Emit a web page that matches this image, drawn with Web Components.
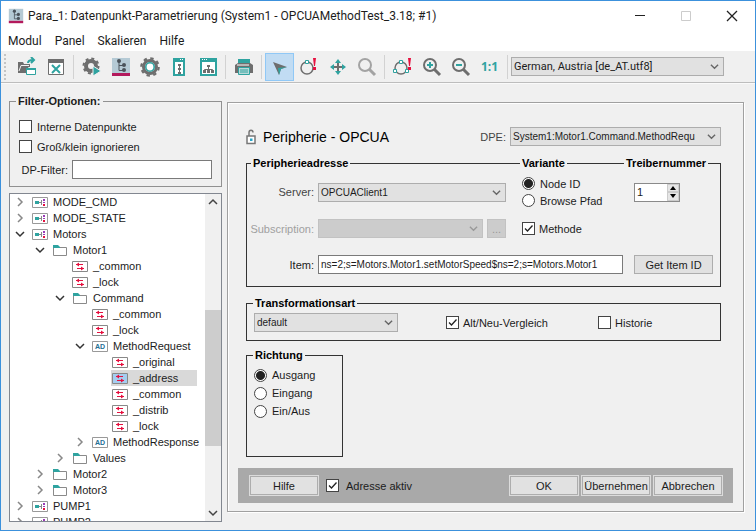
<!DOCTYPE html>
<html lang="de">
<head>
<meta charset="utf-8">
<title>Para_1: Datenpunkt-Parametrierung</title>
<style>
    body {
        margin: 0;
        font-family: "Liberation Sans", Arial, sans-serif;
        font-size: 11px;
        color: #1c1c1c;
    }
</style>
</head>
<body>
<para-window></para-window>

<script>
const GREY = '#6e6e6e';
const TEAL = '#2fa3a0';

// Every icon is drawn on a 20 x 20 grid unless it brings its own view box
const ICONS = {
    para: `<path fill="#b5cad5" d="M1 1h18v15H1z"/><path fill="#b3195c" d="M1 16h18v3H1z"/>
        <g fill="#4b535b"><circle cx="8" cy="4" r="2"/><circle cx="13" cy="8" r="2"/><circle cx="13" cy="13" r="2"/></g>
        <path fill="none" stroke="#4b535b" d="M8 4v9.500h5M8 8.500h5"/>`,
    open: `<path fill="${GREY}" d="M1 5h5l1 2h6v3h-2l-2 6H1z"/><path fill="${GREY}" d="M3 9h9l-3 7H1z"/>
        <path fill="none" stroke="#f0f0f0" d="M2 14l2-5.500h8"/>
        <path fill="none" stroke="${TEAL}" stroke-width="2" d="M11 6c0-2 2-3 5-3M14 0l3 3-3 3"/>
        <path fill="#fff" stroke="${TEAL}" d="M9.500 11.500h9v6h-9z"/><path fill="${TEAL}" d="M9 11h10v2H9z"/>`,
    close: `<path fill="#fff" stroke="${GREY}" d="M2.500 3.500h15v14h-15z"/><path fill="${GREY}" d="M2 2h16v4H2z"/>
        <path stroke="${TEAL}" stroke-width="2" d="M6 8l8 8M14 8l-8 8"/>`,
    run: `<circle cx="9" cy="9" r="5" fill="none" stroke="${GREY}" stroke-width="4"/>
        <circle cx="9" cy="9" r="7.500" fill="none" stroke="${GREY}" stroke-width="2" stroke-dasharray="3 2.900"/>
        <path fill="${TEAL}" stroke="#f0f0f0" d="M11 9l8 5-8 5z"/>`,
    gear: `<circle cx="10" cy="10" r="6.500" fill="#f0f0f0" stroke="${GREY}" stroke-width="3"/>
        <circle cx="10" cy="10" r="8.700" fill="none" stroke="${GREY}" stroke-width="2.200" stroke-dasharray="3.400 3.430"/>
        <circle cx="10" cy="10" r="4.200" fill="#fff" stroke="${TEAL}" stroke-width="1.600"/>`,
    panel: `<path fill="#fff" stroke="${TEAL}" stroke-width="2" d="M5 2h10v16H5z"/><path fill="${TEAL}" d="M4 1h12v4H4z"/>
        <path fill="#fff" d="M11 2h1v1h-1zM13 2h1v1h-1z"/><path stroke="${GREY}" d="M10.500 8v8"/>
        <path fill="${GREY}" d="M9 7h3v2H9zM9 11h3v2H9zM9 15h3v2H9z"/>`,
    modules: `<path fill="#fff" stroke="${TEAL}" stroke-width="2" d="M3 2h15v16H3z"/><path fill="${TEAL}" d="M2 1h17v4H2z"/>
        <path fill="#fff" d="M4 2h1v1H4zM6 2h1v1H6zM8 2h1v1H8z"/><path fill="none" stroke="${GREY}" d="M10.500 9v5M6.500 15v-2.500h8V15"/>
        <path fill="${GREY}" d="M9 8h3v2H9zM5 13h3v3H5zM9 13h3v3H9zM13 13h3v3h-3z"/>`,
    print: `<path fill="${TEAL}" d="M4 2h12v4H4z"/><path fill="${GREY}" d="M4 6h12l3 2v8H1V8z"/>
        <path fill="#b9d9d8" stroke="${TEAL}" d="M4.500 10.500h11v7h-11z"/><path stroke="${TEAL}" d="M6 13h8M6 15h8"/><path stroke="#fff" d="M3 8h12"/>`,
    pointer: `<path fill="${GREY}" d="M3 5l14 5-6 2-2 6z"/><path fill="${TEAL}" d="M17 10l-6 2-2 6-1-7z"/>`,
    alert: `<circle cx="8" cy="11" r="6" fill="none" stroke="${GREY}" stroke-width="1.500"/>
        <path fill="#fff" stroke="${TEAL}" d="M6.500 3.500h3v3h-3z"/><path fill="#e6103f" d="M14 1h3l-1 8h-1zM14 10h3v3h-3z"/>`,
    move: `<path stroke="${GREY}" stroke-width="2" d="M10 4v12M4 10h12"/>
        <path fill="${TEAL}" d="M10 2l3 4H7zM10 18l3-4H7zM2 10l4-3v6zM18 10l-4-3v6z"/>`,
    magnifier: `<circle cx="8" cy="8" r="6" fill="none" stroke="#a3a3a3" stroke-width="2"/><path stroke="#a3a3a3" stroke-width="3" d="M12 12l6 6"/>`,
    alerts: `<circle cx="8" cy="11" r="6" fill="none" stroke="${GREY}" stroke-width="1.500"/>
        <path fill="#fff" stroke="${TEAL}" d="M6.500 3.500h3v3h-3zM.500 12.500h3v3h-3zM12.500 12.500h3v3h-3z"/>
        <path fill="#e6103f" d="M15 1h3l-1 8h-1zM15 10h3v3h-3z"/>`,
    zoomIn: `<circle cx="8" cy="8" r="6" fill="none" stroke="${GREY}" stroke-width="2"/><path stroke="${GREY}" stroke-width="3" d="M12 12l6 6"/>
        <path stroke="${TEAL}" stroke-width="2" d="M8 5v6M5 8h6"/>`,
    zoomOut: `<circle cx="8" cy="8" r="6" fill="none" stroke="${GREY}" stroke-width="2"/><path stroke="${GREY}" stroke-width="3" d="M12 12l6 6"/>
        <path stroke="${TEAL}" stroke-width="2" d="M5 8h6"/>`,
    minimize: `<path stroke="#222" d="M5 9.500h10"/>`,
    maximize: `<path fill="none" stroke="#ccc" d="M5.500 5.500h9v9h-9z"/>`,
    quit: `<path stroke="#222" stroke-width="1.300" d="M5 5l10 10M15 5L5 15"/>`,
    lock: { box: '0 0 10 16', svg: `<path fill="none" stroke="#777" stroke-width="1.500" d="M3 7V3.500C3 .500 7 .500 7 3.500"/>
        <path fill="#fff" stroke="#777" stroke-width="1.500" d="M1 7h8v7.500H1z"/><path fill="#2aa5c8" d="M4 9.500h2.500V12H4z"/>` },
    point: { box: '0 0 16 12', svg: `<path fill="#fff" stroke="#999" d="M.500 1.500h15v10H.500z"/><path fill="${TEAL}" d="M3 5h4v3H3z"/>
        <path stroke="#888" d="M7 6.500h2M9.500 4v5"/><path fill="#9a3bb8" d="M11 3h2v2h-2zM11 6h2v1h-2z"/><path fill="#e6103f" d="M11 8h2v2h-2z"/>` },
    config: { box: '0 0 16 12', svg: `<path fill="var(--icon-fill, #fff)" stroke="#888" d="M.500 1.500h15v10H.500z"/><path stroke="#e6103f" d="M4 4.500h7M5 8.500h7"/>
        <path fill="#e6103f" d="M4 4.500l3-2v4zM12 8.500l-3-2v4z"/>` },
    folder: { box: '0 0 16 12', svg: `<path fill="#fff" stroke="#8a8a8a" d="M1.500 3.500h13v8h-13z"/><path fill="${TEAL}" d="M1 1h5l2 2v1H1z"/>` },
    value: { box: '0 0 16 12', svg: `<path fill="#fff" stroke="#999" d="M.500 1.500h15v10H.500z"/>
        <text x="8" y="9" text-anchor="middle" font-size="7" font-weight="bold" fill="#256e94">AD</text>` },
    right: { box: '0 0 10 10', svg: `<path fill="none" stroke="#888" stroke-width="1.500" d="M3 1l4 4-4 4"/>` },
    down: { box: '0 0 10 10', svg: `<path fill="none" stroke="currentColor" stroke-width="1.500" d="M1 3l4 4 4-4"/>` },
    up: { box: '0 0 10 10', svg: `<path fill="none" stroke="currentColor" stroke-width="1.500" d="M1 7l4-4 4 4"/>` },
    tick: { box: '0 0 13 13', svg: `<path fill="none" stroke="#222" stroke-width="1.300" d="M3 6.500l2.500 2.500L10.500 3.500"/>` }
};

class UiIcon extends HTMLElement {
    constructor() {
        super();
        this.attachShadow({ mode: 'open' });
    }

    connectedCallback() {
        const icon = ICONS[this.getAttribute('name')];
        this.shadowRoot.innerHTML = `
            <style>
                :host { display: block; flex: none; width: 20px; height: 20px; }
                svg { display: block; width: 100%; height: 100%; }
            </style>
            <svg viewBox="${icon.box || '0 0 20 20'}" aria-hidden="true">${icon.svg || icon}</svg>
        `;
    }
}

class TitleBar extends HTMLElement {
    constructor() {
        super();
        const shadow = this.attachShadow({ mode: 'open' });
        shadow.innerHTML = `
            <style>
                :host {
                    display: flex;
                    align-items: center;
                    height: 29px;
                    padding-left: 7px;
                    background: #fff;
                    font: 12px Roboto, "Open Sans", sans-serif;
                }
                .logo { width: 16px; height: 16px; margin-right: 4px; }
                h1 { flex: 1; margin: 0; font-size: 12px; font-weight: normal; white-space: nowrap; }
                button {
                    display: flex;
                    justify-content: center;
                    width: 46px;
                    padding: 0;
                    border: 0;
                    background: none;
                }
            </style>
            <ui-icon class="logo" name="para"></ui-icon>
            <h1><slot></slot></h1>
            <button aria-label="Minimieren"><ui-icon name="minimize"></ui-icon></button>
            <button aria-label="Maximieren" disabled><ui-icon name="maximize"></ui-icon></button>
            <button aria-label="Schließen"><ui-icon name="quit"></ui-icon></button>
        `;
    }
}

class MenuBar extends HTMLElement {
    constructor() {
        super();
        const shadow = this.attachShadow({ mode: 'open' });
        shadow.innerHTML = `
            <style>
                :host {
                    display: flex;
                    gap: 13px;
                    height: 21px;
                    padding: 0 7px;
                    background: #fff;
                }
                button {
                    padding: 0;
                    border: 0;
                    background: none;
                    font: 12px Roboto, "Open Sans", sans-serif;
                    color: inherit;
                }
            </style>
            <button>Modul</button>
            <button>Panel</button>
            <button>Skalieren</button>
            <button>Hilfe</button>
        `;
    }
}

class ToolBar extends HTMLElement {
    constructor() {
        super();
        const groups = [
            ['open', 'close'],
            ['run', 'para', 'gear', 'panel', 'modules'],
            ['print'],
            ['pointer', 'alert', 'move', 'magnifier'],
            ['alerts', 'zoomIn', 'zoomOut', 'scale']
        ];
        const button = name => name === 'scale'
            ? '<button class="scale">1:1</button>'
            : `<button aria-label="${name}" class="${name}"><ui-icon name="${name}"></ui-icon></button>`;

        const shadow = this.attachShadow({ mode: 'open' });
        shadow.innerHTML = `
            <style>
                :host {
                    display: flex;
                    align-items: center;
                    height: 31px;
                    padding-left: 3px;
                    border-bottom: 1px solid #bdbdbd;
                    box-shadow: 0 1px #fafafa;
                }
                .grip { width: 2px; height: 26px; margin-right: 6px; border-left: 2px dotted #c4c4c4; box-sizing: border-box; }
                hr { flex: none; width: 1px; height: 24px; margin: 0 3px; border: 0; background: #d2d2d2; }
                button {
                    display: flex;
                    flex: none;
                    align-items: center;
                    justify-content: center;
                    width: 29px;
                    height: 28px;
                    padding: 0;
                    border: 0;
                    background: none;
                }
                .pointer { background: #c1dcf3; box-shadow: inset 0 0 0 1px #90c8f6; }
                .scale { font: bold 12px "Open Sans", "Noto Sans", sans-serif; color: ${TEAL}; }
                select-field { width: 213px; font-family: Roboto, "Open Sans", sans-serif; }
            </style>
            <div class="grip"></div>
            ${groups.map(names => names.map(button).join('')).join('<hr>')}
            <hr>
            <select-field name="Sprache" value="German, Austria [de_AT.utf8]"></select-field>
        `;
    }
}

class SelectField extends HTMLElement {
    constructor() {
        super();
        this.attachShadow({ mode: 'open' });
    }

    connectedCallback() {
        const label = this.getAttribute('label');
        const disabled = this.hasAttribute('disabled') ? 'disabled' : '';
        this.shadowRoot.innerHTML = `
            <style>
                :host { display: flex; align-items: center; gap: 4px; min-width: 0; }
                label { width: var(--label-width, auto); flex: none; text-align: right; color: #444; }
                .box { flex: 1; display: grid; align-items: center; min-width: 0; }
                select {
                    grid-area: 1 / 1;
                    appearance: none;
                    box-sizing: border-box;
                    width: 100%;
                    height: 19px;
                    padding: 0 18px 0 2px;
                    border: 1px solid #adadad;
                    border-radius: 0;
                    background: #e1e1e1;
                    font: inherit;
                    font-size: var(--value-size, 11px);
                    color: #1c1c1c;
                    opacity: 1;
                }
                ui-icon {
                    grid-area: 1 / 1;
                    justify-self: end;
                    width: 9px;
                    height: 9px;
                    margin-right: 5px;
                    color: #666;
                    pointer-events: none;
                }
                :host([disabled]) label { color: #a0a0a0; }
                :host([disabled]) select { background: #ccc; border-color: #c2c2c2; }
                :host([disabled]) ui-icon { color: #999; }
            </style>
            ${label ? `<label for="field">${label}</label>` : ''}
            <div class="box">
                <select id="field" ${label ? '' : `aria-label="${this.getAttribute('name')}"`} ${disabled}>
                    <option>${this.getAttribute('value') || ''}</option>
                </select>
                <ui-icon name="down"></ui-icon>
            </div>
            <slot></slot>
        `;
    }
}

class TextField extends HTMLElement {
    constructor() {
        super();
        this.attachShadow({ mode: 'open' });
    }

    connectedCallback() {
        this.shadowRoot.innerHTML = `
            <style>
                :host { display: flex; align-items: center; gap: 4px; min-width: 0; }
                label { width: var(--label-width, auto); flex: none; text-align: right; }
                input {
                    flex: 1;
                    min-width: 0;
                    box-sizing: border-box;
                    height: 19px;
                    padding: 0 2px;
                    border: 1px solid #7a7a7a;
                    background: #fff;
                    font: inherit;
                    font-size: var(--value-size, 11px);
                    color: inherit;
                }
            </style>
            <label for="field">${this.getAttribute('label')}</label>
            <input id="field" type="text" value="${this.getAttribute('value') || ''}">
        `;
    }
}

class CheckOption extends HTMLElement {
    constructor() {
        super();
        this.attachShadow({ mode: 'open' });
    }

    connectedCallback() {
        this.shadowRoot.innerHTML = `
            <style>
                :host { display: block; }
                label { display: flex; align-items: center; gap: var(--check-gap, 4px); white-space: nowrap; }
                .box { display: grid; }
                input {
                    grid-area: 1 / 1;
                    appearance: none;
                    box-sizing: border-box;
                    width: 13px;
                    height: 13px;
                    margin: 0;
                    border: 1px solid #444;
                    background: #fff;
                }
                ui-icon { grid-area: 1 / 1; width: 13px; height: 13px; visibility: hidden; pointer-events: none; }
                input:checked + ui-icon { visibility: visible; }
            </style>
            <label>
                <span class="box">
                    <input type="checkbox" ${this.hasAttribute('checked') ? 'checked' : ''}>
                    <ui-icon name="tick"></ui-icon>
                </span>
                <slot></slot>
            </label>
        `;
    }
}

class RadioList extends HTMLElement {
    constructor() {
        super();
        this.attachShadow({ mode: 'open' });
    }

    connectedCallback() {
        // The first of the options is the selected one
        const options = this.getAttribute('options').split(',');
        this.shadowRoot.innerHTML = `
            <style>
                :host { display: block; }
                label { display: flex; align-items: center; gap: 5px; height: var(--radio-row, 18px); }
                input {
                    appearance: none;
                    box-sizing: border-box;
                    width: 13px;
                    height: 13px;
                    margin: 0;
                    border: 1px solid #444;
                    border-radius: 50%;
                    background: #fff;
                }
                input:checked { background: radial-gradient(circle, #222 0 4px, #fff 5px); }
            </style>
            ${options.map((option, i) => `
                <label><input type="radio" name="choice" ${i === 0 ? 'checked' : ''}>${option}</label>
            `).join('')}
        `;
    }
}

class PushButton extends HTMLElement {
    constructor() {
        super();
        this.attachShadow({ mode: 'open' });
    }

    connectedCallback() {
        this.shadowRoot.innerHTML = `
            <style>
                :host { display: block; }
                button {
                    box-sizing: border-box;
                    width: 100%;
                    height: 19px;
                    padding: 0;
                    border: 1px solid #adadad;
                    background: #e1e1e1;
                    font: inherit;
                    color: inherit;
                    white-space: nowrap;
                }
                button:disabled { background: #ccc; border-color: #c2c2c2; color: #999; }
                :host([framed]) button { box-shadow: 0 0 0 1px #dcdcdc; }
            </style>
            <button ${this.hasAttribute('disabled') ? 'disabled' : ''}><slot></slot></button>
        `;
    }
}

class NumberField extends HTMLElement {
    constructor() {
        super();
        const shadow = this.attachShadow({ mode: 'open' });
        shadow.innerHTML = `
            <style>
                :host {
                    display: flex;
                    box-sizing: border-box;
                    width: 46px;
                    height: 19px;
                    border: 1px solid #8a8a8a;
                    background: #fff;
                }
                input {
                    appearance: textfield;
                    flex: 1;
                    min-width: 0;
                    padding: 0 2px;
                    border: 0;
                    background: none;
                    font: inherit;
                    color: inherit;
                }
                input::-webkit-inner-spin-button { display: none; }
                .steps { display: flex; flex-direction: column; width: 12px; }
                button {
                    flex: 1;
                    display: flex;
                    align-items: center;
                    justify-content: center;
                    padding: 0;
                    border: 0;
                    background: #e6e6e6;
                    box-shadow: inset 0 0 0 1px #ccc;
                }
                svg { width: 6px; height: 4px; }
            </style>
            <input type="number" value="1" aria-label="Treibernummer">
            <div class="steps">
                <button aria-label="Mehr"><svg viewBox="0 0 6 4"><path d="M0 4l3-4 3 4z"/></svg></button>
                <button aria-label="Weniger"><svg viewBox="0 0 6 4"><path d="M0 0l3 4 3-4z"/></svg></button>
            </div>
        `;
    }
}

class FilterOptions extends HTMLElement {
    constructor() {
        super();
        const shadow = this.attachShadow({ mode: 'open' });
        shadow.innerHTML = `
            <style>
                :host { display: block; --check-gap: 5px; }
                fieldset {
                    display: flex;
                    flex-direction: column;
                    gap: 7px;
                    min-width: 0;
                    margin: 0;
                    padding: 12px 9px 7px;
                    border: 1px solid #919191;
                }
                legend { margin-left: -3px; padding: 0 2px; font-weight: bold; line-height: 13px; }
                text-field { --label-width: 49px; }
            </style>
            <fieldset>
                <legend>Filter-Optionen:</legend>
                <check-option>Interne Datenpunkte</check-option>
                <check-option>Groß/klein ignorieren</check-option>
                <text-field label="DP-Filter:"></text-field>
            </fieldset>
        `;
    }
}

class TreeNode extends HTMLElement {
    constructor() {
        super();
        this.attachShadow({ mode: 'open' });
    }

    connectedCallback() {
        const icon = this.getAttribute('icon') || 'config';
        const arrow = this.hasAttribute('open') ? 'down' : 'right';
        this.shadowRoot.innerHTML = `
            <style>
                :host { display: block; }
                .row { display: flex; align-items: center; height: 16px; }
                .arrow { width: 10px; height: 10px; margin-right: 6px; color: #333; }
                .name { display: flex; align-items: center; gap: 5px; height: 16px; padding-left: 1px; white-space: nowrap; }
                .name ui-icon { width: 16px; height: 12px; }
                .children { padding-left: 20px; }
                :host([selected]) .name { padding-right: 19px; background: #d9d9d9; --icon-fill: #a5cdf0; }
            </style>
            <div class="row">
                ${icon === 'config' ? '<span class="arrow"></span>' : `<ui-icon class="arrow" name="${arrow}"></ui-icon>`}
                <span class="name"><ui-icon name="${icon}"></ui-icon>${this.getAttribute('label')}</span>
            </div>
            <div class="children"><slot></slot></div>
        `;
    }
}

class ScrollBar extends HTMLElement {
    constructor() {
        super();
        const shadow = this.attachShadow({ mode: 'open' });
        shadow.innerHTML = `
            <style>
                :host { display: flex; flex-direction: column; width: 16px; background: #f0f0f0; color: #444; }
                ui-icon { width: 10px; height: 10px; margin: 3px; }
                .before { flex: 100; }
                .thumb { flex: 136; background: #cdcdcd; }
                .after { flex: 59; }
            </style>
            <ui-icon name="up"></ui-icon>
            <div class="before"></div>
            <div class="thumb"></div>
            <div class="after"></div>
            <ui-icon name="down"></ui-icon>
        `;
    }
}

class DatapointTree extends HTMLElement {
    constructor() {
        super();
        const shadow = this.attachShadow({ mode: 'open' });
        shadow.innerHTML = `
            <style>
                :host {
                    display: flex;
                    min-height: 0;
                    border: 1px solid #828790;
                    background: #fff;
                }
                .nodes { flex: 1; min-width: 0; padding-left: 5px; overflow: hidden; }
            </style>
            <div class="nodes">
                <tree-node icon="point" label="MODE_CMD"></tree-node>
                <tree-node icon="point" label="MODE_STATE"></tree-node>
                <tree-node icon="point" label="Motors" open>
                    <tree-node icon="folder" label="Motor1" open>
                        <tree-node label="_common"></tree-node>
                        <tree-node label="_lock"></tree-node>
                        <tree-node icon="folder" label="Command" open>
                            <tree-node label="_common"></tree-node>
                            <tree-node label="_lock"></tree-node>
                            <tree-node icon="value" label="MethodRequest" open>
                                <tree-node label="_original"></tree-node>
                                <tree-node label="_address" selected></tree-node>
                                <tree-node label="_common"></tree-node>
                                <tree-node label="_distrib"></tree-node>
                                <tree-node label="_lock"></tree-node>
                            </tree-node>
                            <tree-node icon="value" label="MethodResponse"></tree-node>
                        </tree-node>
                        <tree-node icon="folder" label="Values"></tree-node>
                    </tree-node>
                    <tree-node icon="folder" label="Motor2"></tree-node>
                    <tree-node icon="folder" label="Motor3"></tree-node>
                </tree-node>
                <tree-node icon="point" label="PUMP1"></tree-node>
                <tree-node icon="point" label="PUMP2"></tree-node>
            </div>
            <scroll-bar></scroll-bar>
        `;
    }
}

class AddressPanel extends HTMLElement {
    constructor() {
        super();
        const shadow = this.attachShadow({ mode: 'open' });
        shadow.innerHTML = `
            <style>
                :host {
                    display: flex;
                    flex-direction: column;
                    box-sizing: border-box;
                    padding: 23px 10px 8px;
                    border: 1px solid #a0a0a0;
                    box-shadow: inset 1px 1px #fff, 1px 1px #fff;
                    --value-size: 10px;
                }
                .head, section { margin: 0 12px 0 8px; }
                .head { display: flex; align-items: center; height: 21px; margin-bottom: 16px; }
                .head ui-icon { width: 10px; height: 16px; margin-right: 7px; }
                h2 { flex: 1; margin: 0; font-size: 14px; font-weight: normal; color: #000; white-space: nowrap; }
                .head select-field { width: 242px; --label-width: 27px; }
                section { border: 1px solid #333; }
                h3 {
                    width: fit-content;
                    height: 14px;
                    margin: -8px 0 0;
                    padding: 0 2px;
                    background: #f0f0f0;
                    font-size: 11px;
                    line-height: 14px;
                    color: #000;
                }
                .address {
                    display: grid;
                    grid-template-columns: minmax(0, 1fr) 112px 79px;
                    grid-template-rows: 6px 44px 29px 43px;
                    align-items: center;
                    padding-right: 7px;
                    margin-bottom: 16px;
                    --label-width: 67px;
                }
                .address h3 { align-self: start; justify-self: start; }
                .address h3:first-child { margin-left: 4px; }
                .address h3:nth-child(2) { margin-left: -2px; }
                .address h3:nth-child(3) { margin-left: -10px; }
                .address > select-field { margin-right: 16px; }
                .address > text-field { grid-column: span 2; margin-right: 11px; }
                .address > check-option { grid-column: span 2; }
                .address radio-list { --radio-row: 17px; }
                .more { width: 19px; }
                .transform { margin-bottom: 14px; }
                .transform h3, .direction h3 { margin-left: 6px; }
                .transform .row {
                    display: grid;
                    grid-template-columns: 192px 152px 1fr;
                    align-items: center;
                    padding: 3px 7px 8px;
                }
                .transform select-field { width: 144px; }
                .direction { width: 95px; height: 100px; }
                .direction radio-list { padding: 4px 7px; }
                footer {
                    display: flex;
                    align-items: center;
                    gap: 4px;
                    height: 35px;
                    margin-top: auto;
                    padding: 0 11px 0 12px;
                    background: #a9a9a9;
                }
                footer push-button { width: 68px; }
                footer check-option { flex: 1; margin-left: 4px; --check-gap: 7px; }
            </style>
            <div class="head">
                <ui-icon name="lock"></ui-icon>
                <h2>Peripherie - OPCUA</h2>
                <select-field label="DPE:" value="System1:Motor1.Command.MethodRequ"></select-field>
            </div>

            <section class="address">
                <h3>Peripherieadresse</h3>
                <h3>Variante</h3>
                <h3>Treibernummer</h3>
                <select-field label="Server:" value="OPCUAClient1"></select-field>
                <radio-list options="Node ID,Browse Pfad"></radio-list>
                <number-field></number-field>
                <select-field label="Subscription:" disabled>
                    <push-button class="more" disabled>...</push-button>
                </select-field>
                <check-option checked>Methode</check-option>
                <text-field label="Item:" value="ns=2;s=Motors.Motor1.setMotorSpeed$ns=2;s=Motors.Motor1"></text-field>
                <push-button>Get Item ID</push-button>
            </section>

            <section class="transform">
                <h3>Transformationsart</h3>
                <div class="row">
                    <select-field name="Transformationsart" value="default"></select-field>
                    <check-option checked>Alt/Neu-Vergleich</check-option>
                    <check-option>Historie</check-option>
                </div>
            </section>

            <section class="direction">
                <h3>Richtung</h3>
                <radio-list options="Ausgang,Eingang,Ein/Aus"></radio-list>
            </section>

            <footer>
                <push-button framed>Hilfe</push-button>
                <check-option checked>Adresse aktiv</check-option>
                <push-button framed>OK</push-button>
                <push-button framed>Übernehmen</push-button>
                <push-button framed>Abbrechen</push-button>
            </footer>
        `;
    }
}

class ParaWindow extends HTMLElement {
    constructor() {
        super();
        const shadow = this.attachShadow({ mode: 'open' });
        shadow.innerHTML = `
            <style>
                :host {
                    display: flex;
                    flex-direction: column;
                    box-sizing: border-box;
                    height: 100vh;
                    border: 1px solid #3c91dc;
                    background: #f0f0f0;
                }
                main {
                    flex: 1;
                    display: grid;
                    grid-template-columns: 213px minmax(0, 1fr);
                    gap: 5px;
                    min-height: 0;
                    padding: 12px 11px 8px 8px;
                }
                aside { display: flex; flex-direction: column; gap: 6px; min-height: 0; }
                datapoint-tree { flex: 1; }
                address-panel { margin: 7px 0 10px; }
            </style>
            <title-bar>Para_1: Datenpunkt-Parametrierung (System1 - OPCUAMethodTest_3.18; #1)</title-bar>
            <menu-bar></menu-bar>
            <tool-bar></tool-bar>
            <main>
                <aside>
                    <filter-options></filter-options>
                    <datapoint-tree></datapoint-tree>
                </aside>
                <address-panel></address-panel>
            </main>
        `;
    }
}

customElements.define('ui-icon', UiIcon);
customElements.define('title-bar', TitleBar);
customElements.define('menu-bar', MenuBar);
customElements.define('select-field', SelectField);
customElements.define('text-field', TextField);
customElements.define('check-option', CheckOption);
customElements.define('radio-list', RadioList);
customElements.define('push-button', PushButton);
customElements.define('number-field', NumberField);
customElements.define('tool-bar', ToolBar);
customElements.define('filter-options', FilterOptions);
customElements.define('tree-node', TreeNode);
customElements.define('scroll-bar', ScrollBar);
customElements.define('datapoint-tree', DatapointTree);
customElements.define('address-panel', AddressPanel);
customElements.define('para-window', ParaWindow);
</script>
</body>
</html>
